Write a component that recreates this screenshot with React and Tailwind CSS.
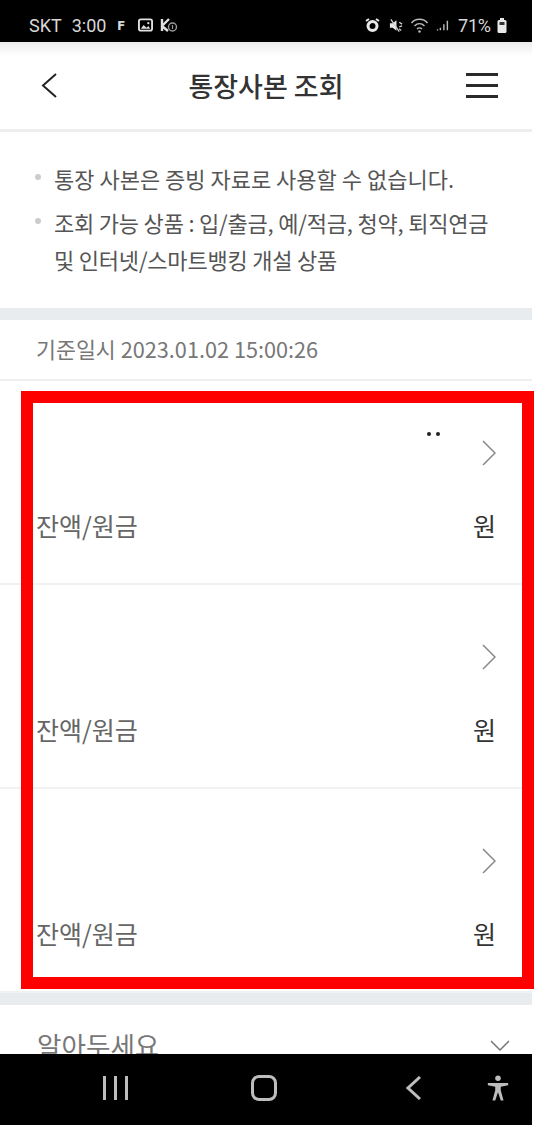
const accounts = [{ id: 1, dots: true }, { id: 2 }, { id: 3 }];

const font = { kr: "font-['Noto_Sans_CJK_KR','Noto_Sans',sans-serif]" };

const Chevron = ({ d, w, h, sw = 1.5, color, className = "" }) => (
  <svg className={`shrink-0 ${className}`} width={w} height={h} viewBox={`0 0 ${w} ${h}`} fill="none" stroke={color} strokeWidth={sw}>
    <path d={d} />
  </svg>
);

const StatusBar = () => (
  <div className="flex h-[42px] w-[532px] items-center justify-between bg-black pl-[29px] pr-[25px] pt-[8px] font-['Roboto',sans-serif] text-[18px] text-[#d8d8d8]">
    <div className="flex items-center">
      <span>SKT</span>
      <span className="ml-[10px]">3:00</span>
      <span className="ml-[11px] text-[13px] font-black leading-none">F</span>
      <svg className="ml-[13px]" width="15" height="14" viewBox="0 0 16 14">
        <rect x="1" y="1" width="14" height="12" rx="2" fill="none" stroke="#e0e0e0" strokeWidth="2" />
        <path d="M3 11l3-4 3 3 2-2 2 3z" fill="#e0e0e0" />
        <circle cx="11" cy="5" r="1.2" fill="#e0e0e0" />
      </svg>
      <svg className="ml-[7px]" width="18" height="16" viewBox="0 0 18 16">
        <path d="M2 2v12M2 9l7-7M2 9l6 5" fill="none" stroke="#e0e0e0" strokeWidth="2.4" />
        <circle cx="12.5" cy="10" r="4" fill="none" stroke="#999" strokeWidth="1.4" />
        <path d="M12.5 8v4" stroke="#999" strokeWidth="1.2" />
      </svg>
    </div>
    <div className="flex items-center">
      <svg width="15" height="15" viewBox="0 0 15 15">
        <circle cx="7.5" cy="8" r="4.500" fill="none" stroke="#e8e8e8" strokeWidth="3" />
        <path d="M1 3l3-2M14 3l-3-2" stroke="#e8e8e8" strokeWidth="2" />
      </svg>
      <svg className="ml-[9px]" width="14" height="15" viewBox="0 0 15 15">
        <path d="M1 5h3l4-3v11l-4-3H1z" fill="#e8e8e8" />
        <path d="M2 1l9 13M11 4l3 2M11 9l3-1M11 11l2 2" stroke="#cfcfcf" strokeWidth="1.4" />
      </svg>
      <svg className="ml-[7px]" width="20" height="16" viewBox="0 0 19 16">
        <path d="M1 6c4-5 12-5 16 0M4 9c3-3 7-3 10 0M6.5 12c1.500-1.500 3.500-1.500 5 0" fill="none" stroke="#bdbdbd" strokeWidth="1.400" />
        <circle cx="9" cy="14.500" r="1.200" fill="#bdbdbd" />
      </svg>
      <svg className="ml-[6px]" width="14" height="15" viewBox="0 0 16 15">
        <path d="M1 12.500h1.500M5 10v3M9 6v7M13 2v11" stroke="#bdbdbd" strokeWidth="1.600" />
      </svg>
      <span className="ml-[8px] w-[35px] whitespace-nowrap tracking-[-0.2px]">71%</span>
      <svg className="ml-[4px]" width="10" height="15" viewBox="0 0 10 15">
        <rect x="0.500" y="2" width="9" height="13" rx="1.500" fill="#e8e8e8" />
        <rect x="3" y="0" width="4" height="2" fill="#e8e8e8" />
        <rect x="2.500" y="4" width="5" height="3" fill="#333" />
      </svg>
    </div>
  </div>
);

const Header = () => (
  <header className="flex h-[87px] items-center justify-between bg-gradient-to-b from-[#ececec] via-white via-[16%] to-white pl-[41px] pr-[34px]">
    <Chevron d="M15 1L2 12.500L15 24" w={16} h={25} sw={2} color="#222" />
    <h1 className="ml-[9px] text-[27px] font-medium leading-none text-[#333]">통장사본 조회</h1>
    <div className="flex w-[32px] flex-col gap-[8px]">
      <span className="h-[3px] bg-[#2a2a2a]" />
      <span className="h-[3px] bg-[#2a2a2a]" />
      <span className="h-[3px] bg-[#2a2a2a]" />
    </div>
  </header>
);

const Notes = () => (
  <section className="h-[179px] border-t-[3px] border-[#eeeeee] pl-[35px] pr-[20px] pt-[28px] text-[22px] leading-[37px] text-[#555]">
    <div className="flex items-start">
      <span className="mr-[13px] mt-[14px] h-[6px] w-[6px] shrink-0 rounded-full bg-[#cccccc]" />
      <p className="whitespace-nowrap">통장 사본은 증빙 자료로 사용할 수 없습니다.</p>
    </div>
    <div className="mt-[7px] flex items-start">
      <span className="mr-[13px] mt-[14px] h-[6px] w-[6px] shrink-0 rounded-full bg-[#cccccc]" />
      <p className="whitespace-nowrap tracking-[-0.2px]">
        조회 가능 상품 : 입/출금, 예/적금, 청약, 퇴직연금
        <br />
        및 인터넷/스마트뱅킹 개설 상품
      </p>
    </div>
  </section>
);

const AccountRow = ({ dots }) => (
  <div className="flex h-[204px] flex-col border-b-[2px] border-[#f2f2f2] pl-[36px] pr-[36px] pt-[59px] last:border-b-0">
    <div className="flex h-[26px] items-start justify-end">
      {dots && (
        <span className="-mt-[8px] mr-[42px] flex gap-[5px]">
          <i className="h-[4px] w-[4px] rounded-full bg-[#222]" />
          <i className="h-[4px] w-[4px] rounded-full bg-[#222]" />
        </span>
      )}
      <Chevron d="M1 1L13 13L1 25" w={14} h={26} color="#888" />
    </div>
    <div className="mt-[42px] flex items-center justify-between text-[25px] leading-[34px]">
      <span className="text-[#666]">잔액/원금</span>
      <span className="text-[#333]">원</span>
    </div>
  </div>
);

export default function App() {
  return (
    <div className={`relative flex h-[1125px] w-[534px] flex-col overflow-hidden bg-white ${font.kr}`}>
      <StatusBar />
      <main className="h-[1012px] w-[532px] overflow-hidden">
        <Header />
        <Notes />
        <div className="h-[12px] bg-[#e9ecef]" />
        <div className="flex h-[61px] items-center border-b-[2px] border-[#f0f0f0] pl-[36px] text-[21.700px] text-[#777]">
          기준일시 2023.01.02 15:00:26
        </div>
        {accounts.map((a) => (
          <AccountRow key={a.id} dots={a.dots} />
        ))}
        <div className="h-[12px] bg-[#e9ecef]" />
        <div className="flex items-center justify-between pl-[37px] pr-[22px] pt-[22px] text-[26.600px] leading-[36px] text-[#777]">
          <span>알아두세요</span>
          <Chevron d="M1 1L10 10L19 1" w={20} h={11} color="#777" />
        </div>
      </main>
      <nav className="flex h-[71px] w-[532px] items-center bg-black pb-[3px] text-[#bdbdbd]">
        <div className="ml-[103px] flex gap-[8px]">
          <span className="h-[24px] w-[3px] bg-[#bdbdbd]" />
          <span className="h-[24px] w-[3px] bg-[#bdbdbd]" />
          <span className="h-[24px] w-[3px] bg-[#bdbdbd]" />
        </div>
        <span className="ml-[123px] h-[26px] w-[26px] rounded-[8px] border-[3px] border-[#bdbdbd]" />
        <Chevron className="ml-[129px]" d="M14 1L2 12L14 23" w={15} h={24} sw={3} color="#bdbdbd" />
        <svg className="ml-[65px]" width="24" height="29" viewBox="0 0 26 30" fill="#bdbdbd">
          <circle cx="13" cy="4" r="3" />
          <path d="M2 9h22v2.500l-8 1.500v4l3 11h-3l-3-9-3 9H7l3-11v-4l-8-1.500z" />
        </svg>
      </nav>
      {/* red annotation box on top of the screenshot */}
      <div className="pointer-events-none absolute left-[21px] top-[391px] h-[598px] w-[513px] border-[12px] border-[#ff0000]" />
    </div>
  );
}
